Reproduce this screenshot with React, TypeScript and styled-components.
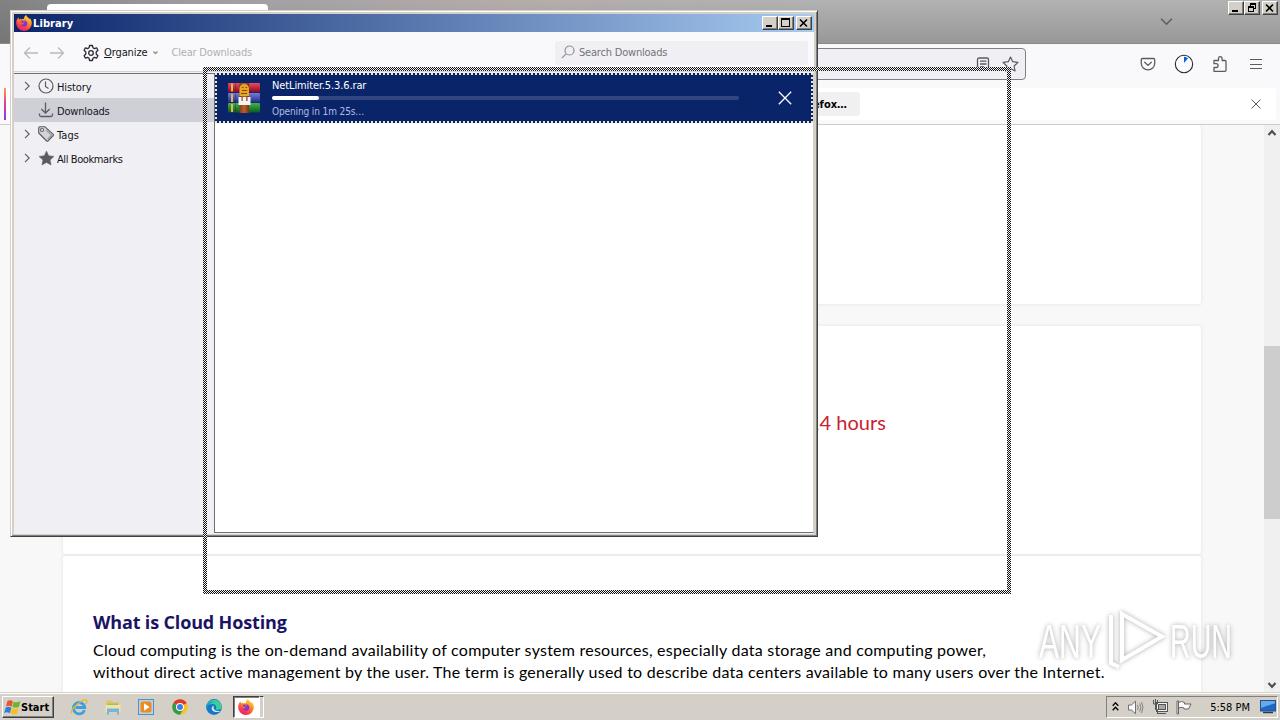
import styled, { createGlobalStyle } from 'styled-components';

const GlobalStyle = createGlobalStyle`
    body {
        margin: 0;
        overflow: hidden;
    }
    * {
        box-sizing: border-box;
    }
    svg {
        display: block;
        flex: none;
    }
`
const Desktop = styled.div`
    position: relative;
    display: flex;
    flex-direction: column;
    width: 1280px;
    height: 720px;
    overflow: hidden;
    background: #f8f8f8;
    font-family: "DejaVu Sans Condensed", "DejaVu Sans", sans-serif;
    font-stretch: condensed;
    font-size: 11px;
    color: #15141a;
    cursor: default;
`
const Text = styled.span<{ $size?: number; $spacing?: number; $color?: string; $bold?: boolean }>`
    font-size: ${p => p.$size || 11}px;
    letter-spacing: ${p => p.$spacing || 0}px;
    color: ${p => p.$color || 'inherit'};
    font-weight: ${p => p.$bold ? 'bold' : 'normal'};
    white-space: pre;
`

/* browser */
const TabStrip = styled.div`
    display: flex;
    justify-content: flex-end;
    height: 44px;
    flex: none;
    padding: 1px 2px 0 47px;
    border-bottom: 1px solid #8a8a8a;
    background:
        linear-gradient(90deg, rgba(90, 90, 90, 0.55), rgba(120, 110, 125, 0.3) 15%, rgba(190, 150, 140, 0.18) 40%, transparent 62%),
        linear-gradient(#b2b2b2, #989898);
`
const Tab = styled.div`
    width: 221px;
    height: 36px;
    margin: 3px auto 0 0;
    border-radius: 4px;
    background: #fff;
`
const TabsChevron = styled.div`
    padding: 14px 55px 0 0;
`
const CaptionButtons = styled.div`
    display: flex;
    height: 14px;
`
const CaptionButton = styled.div<{ $gap?: boolean }>`
    display: flex;
    align-items: center;
    justify-content: center;
    width: 16px;
    height: 14px;
    margin-left: ${p => p.$gap ? 2 : 0}px;
    background: #d4d0c8;
    border: 1px solid;
    border-color: #fff #404040 #404040 #fff;
    box-shadow: inset -1px -1px 0 #808080;
`
const NavBar = styled.div`
    display: flex;
    align-items: center;
    height: 44px;
    flex: none;
    padding: 0 14px 4px 200px;
    background: #f9f9fb;
`
const UrlBar = styled.div`
    display: flex;
    align-items: center;
    justify-content: flex-end;
    gap: 12px;
    width: 826px;
    height: 32px;
    padding-right: 6px;
    border: 1px solid #7f7f8a;
    border-radius: 4px;
    background: #f0f0f4;
`
const NavIcons = styled.div`
    display: flex;
    align-items: center;
    gap: 18px;
    margin-left: auto;
`
const InfoBar = styled.div`
    display: flex;
    height: 37px;
    flex: none;
    padding: 0 4px 4px 4px;
    background: #f9f9fb;
    border-bottom: 1px solid #ccc;
`
const InfoStripe = styled.div`
    width: 2px;
    height: 32px;
    background: linear-gradient(#ff9a56, #e0389a 50%, #8a3ae8);
`
const InfoBody = styled.div`
    display: flex;
    align-items: center;
    justify-content: space-between;
    flex: 1;
    height: 32px;
    padding: 0 15px 0 594px;
    background: #fff;
    border-radius: 0 4px 4px 0;
`
const InfoButton = styled.div`
    display: flex;
    align-items: center;
    justify-content: flex-end;
    width: 260px;
    height: 24px;
    padding-right: 13px;
    border-radius: 4px;
    background: #f0f0f0;
    font-size: 11px;
    font-weight: bold;
    color: #000;
`
const PageArea = styled.div`
    display: flex;
    flex: 1;
    min-height: 0;
`
const Page = styled.div`
    display: flex;
    flex-direction: column;
    flex: 1;
    padding: 0 63px;
    overflow: hidden;
    font-family: "Noto Sans", sans-serif;
    font-stretch: normal;
    color: #111;
`
const Card = styled.div<{ $height: number; $gap: number }>`
    height: ${p => p.$height}px;
    flex: none;
    width: 1138px;
    margin-bottom: ${p => p.$gap}px;
    background: #fff;
    border-radius: 3px;
    box-shadow: 0 0 4px #e2e2e2;
`
const ExpireText = styled.p`
    margin: 0;
    padding: 81px 0 0 745px;
    font-family: Lato, sans-serif;
    font-size: 20px;
    line-height: 30px;
    color: #cc2030;
    white-space: pre;
`
const Article = styled.div`
    padding: 55px 0 0 30px;
    line-height: 22px;
`
const ArticleTitle = styled.h2`
    margin: 0 0 6px;
    font-family: "Open Sans", sans-serif;
    font-size: 18px;
    line-height: 22px;
    font-weight: 700;
    color: #1b1464;
    letter-spacing: -0.15px;
    white-space: pre;
`
const ArticleLine = styled.div<{ $spacing: number }>`
    font-family: Lato, sans-serif;
    font-size: 16px;
    letter-spacing: ${p => p.$spacing}px;
    color: #000;
    white-space: pre;
`
const Scrollbar = styled.div`
    display: flex;
    flex-direction: column;
    align-items: center;
    justify-content: space-between;
    width: 16px;
    padding: 4px 0 3px;
    background: #f0f0f0;
`
const ScrollTrack = styled.div`
    flex: 1;
    width: 16px;
    padding-top: 209px;
`
const ScrollThumb = styled.div`
    height: 173px;
    background: #cdcdcd;
`

/* library window */
const LibraryWindow = styled.div`
    position: absolute;
    left: 10px;
    top: 10px;
    display: flex;
    flex-direction: column;
    width: 808px;
    height: 527px;
    padding: 2px;
    background: #d4d0c8;
    border: 1px solid;
    border-color: #d4d0c8 #404040 #404040 #d4d0c8;
    box-shadow: inset 1px 1px 0 #fff, inset -1px -1px 0 #808080;
`
const TitleBar = styled.div`
    display: flex;
    align-items: center;
    height: 18px;
    flex: none;
    margin: 1px 1px 0;
    padding: 0 2px;
    background: linear-gradient(90deg, #0a246a, #a6caf0);
    color: #fff;
`
const TitleText = styled(Text)`
    margin: 0 auto 0 1px;
    padding-top: 2px;
    line-height: 16px;
`
const Toolbar = styled.div`
    display: flex;
    align-items: center;
    height: 39px;
    flex: none;
    margin: 0 1px;
    padding: 2px 6px 0 9px;
    background: #f9f9fb;
`
const HistoryButtons = styled.div`
    display: flex;
    gap: 11px;
`
const Organize = styled.div`
    display: flex;
    align-items: center;
    margin: 0 14px 0 17px;
    gap: 5px;
`
const SearchBox = styled.div`
    display: flex;
    align-items: center;
    gap: 3px;
    width: 253px;
    height: 24px;
    margin-left: auto;
    padding-left: 6px;
    background: #f0f0f4;
    border-radius: 3px;
`
const LibraryBody = styled.div`
    display: flex;
    flex: 1;
    margin: 0 1px;
    border-top: 1px solid #d2d2d2;
    background: #f0f0f4;
`
const Sidebar = styled.div`
    width: 200px;
    margin-top: 1px;
    border-top: 1px solid #707070;
`
const SideRow = styled.div<{ $selected?: boolean }>`
    display: flex;
    align-items: center;
    height: 24px;
    padding-left: 8px;
    background: ${p => p.$selected ? '#cfcfd8' : 'transparent'};
`
const SideIcons = styled.div`
    display: flex;
    align-items: center;
    gap: 6px;
    width: 35px;
`
const SideLabel = styled(Text)`
    padding-top: 2px;
`
const DownloadList = styled.div`
    flex: 1;
    margin: 1px 0 1px;
    border: 1px solid #707070;
    border-top: 0;
    border-right-color: #d4d0c8;
    background: #fff;
`
const DownloadItem = styled.div`
    height: 50px;
    padding: 2px;
    background:
        repeating-linear-gradient(90deg, #e8e4d0 0 2px, #0a246a 2px 4px) top / 100% 2px no-repeat,
        repeating-linear-gradient(90deg, #e8e4d0 0 2px, #0a246a 2px 4px) bottom / 100% 2px no-repeat,
        repeating-linear-gradient(#e8e4d0 0 2px, #0a246a 2px 4px) left / 2px 100% no-repeat,
        repeating-linear-gradient(#e8e4d0 0 2px, #0a246a 2px 4px) right / 2px 100% no-repeat,
        #0a246a;
    color: #fff;
`
const DownloadInner = styled.div`
    display: flex;
    align-items: center;
    height: 46px;
    padding: 0 19px 0 10px;
`
const DownloadInfo = styled.div`
    display: flex;
    flex-direction: column;
    width: 467px;
    margin-left: 12px;
    margin-right: auto;
    padding-top: 2px;
    line-height: 14px;
`
const ProgressTrack = styled.div`
    height: 4px;
    margin: 3px 0 5px;
    border-radius: 2px;
    background: #32477f;
`
const ProgressFill = styled.div`
    height: 4px;
    border-radius: 2px;
    background: #fff;
`

/* outline that is dragged along with the mouse */
const DragOutline = styled.div`
    position: absolute;
    left: 203px;
    top: 67px;
    width: 808px;
    height: 527px;
    background: repeating-conic-gradient(#111 0 25%, #f4f4f4 0 50%) 0 0 / 2px 2px;
    clip-path: polygon(evenodd, 0 0, 100% 0, 100% 100%, 0 100%, 0 0, 4px 4px, 804px 4px, 804px 523px, 4px 523px, 4px 4px);
`
const Watermark = styled.div`
    position: absolute;
    left: 1032px;
    top: 604px;
    opacity: 0.85;
    filter: drop-shadow(0 0 2px rgba(0, 0, 0, 0.28)) drop-shadow(0 0 3px rgba(0, 0, 0, 0.14));
`

/* taskbar */
const Taskbar = styled.div`
    display: flex;
    align-items: center;
    height: 28px;
    flex: none;
    padding: 1px 2px 0;
    background: #d4d0c8;
    border-top: 1px solid #d4d0c8;
    box-shadow: inset 0 1px 0 #fff;
`
const StartButton = styled.div`
    display: flex;
    align-items: center;
    width: 52px;
    height: 22px;
    padding-left: 1px;
    background: #d4d0c8;
    border: 1px solid;
    border-color: #fff #404040 #404040 #fff;
    box-shadow: inset -1px -1px 0 #808080;
    color: #000;
`
const QuickLaunch = styled.div`
    display: flex;
    align-items: center;
    gap: 15.700px;
    margin-left: 16px;
`
const TaskButton = styled.div`
    display: flex;
    align-items: center;
    justify-content: center;
    width: 27px;
    height: 22px;
    margin-left: 10px;
    background: #fff;
    border: 1px solid;
    border-color: #404040 #fff #fff #404040;
    box-shadow: inset 1px 1px 0 #808080;
`
const TaskStack = styled.div`
    width: 4px;
    height: 22px;
    border: 1px solid;
    border-color: #404040 #fff #fff transparent;
    border-left: 0;
`
const Tray = styled.div`
    display: flex;
    align-items: center;
    width: 172px;
    height: 22px;
    margin-left: auto;
    padding: 0 1px 0 5px;
    border: 1px solid;
    border-color: #808080 #fff #fff #808080;
    color: #000;
`
const TrayIcons = styled.div`
    display: flex;
    align-items: center;
    gap: 8px;
    margin-right: auto;
`
const Clock = styled(Text)`
    margin-right: 10px;
`

const MinimizeGlyph = () => (
    <svg width="10" height="10" shapeRendering="crispEdges"><rect x="1" y="7" width="6" height="2" /></svg>
)
const MaximizeGlyph = () => (
    <svg width="10" height="10" shapeRendering="crispEdges"><path d="M0 0h9v9H0zM1 2v6h7V2z" fillRule="evenodd" /></svg>
)
const RestoreGlyph = () => (
    <svg width="10" height="10" shapeRendering="crispEdges"><path d="M3 0h6v6H7v3H1V3h2zM4 2v1h3v2h1V2zM2 5v3h4V5z" fillRule="evenodd" /></svg>
)
const CloseGlyph = () => (
    <svg width="10" height="10" viewBox="0 0 10 10"><path d="M1 1.500l7 7M8 1.500l-7 7" stroke="#000" strokeWidth="1.600" /></svg>
)
const Cross = ({ size, color, width = 1.2 }: { size: number; color: string; width?: number }) => (
    <svg width={size} height={size} viewBox="0 0 12 12"><path d="M.7.7l10.6 10.6M11.3.7L.7 11.3" stroke={color} strokeWidth={width} /></svg>
)
const Chevron = ({ dir, w = 12, color = '#5b5b66' }: { dir: string; w?: number; color?: string }) => (
    <svg width={w} height={w} viewBox="0 0 12 12" fill="none" stroke={color} strokeWidth={w < 8 ? 3 : 1.4}>
        {dir === 'down' && <path d="M1 3.5l5 5 5-5" />}
        {dir === 'right' && <path d="M3.600 1L8.600 6l-5 5" />}
    </svg>
)
const ScrollArrow = ({ up }: { up?: boolean }) => (
    <svg width="10" height="8" viewBox="0 0 10 8" fill="none" stroke="#505050" strokeWidth="2.2">
        {up ? <path d="M1.500 6L5 2.200 8.500 6" /> : <path d="M1.500 2L5 5.800 8.500 2" />}
    </svg>
)
const NavArrow = ({ right }: { right?: boolean }) => (
    <svg width="16" height="14" viewBox="0 0 16 14" fill="none" stroke="#b8b8bd" strokeWidth="1.300">
        {right ? <path d="M0 7h13.500M8 1.500L13.500 7 8 12.500" /> : <path d="M15 7H1.500M7 1.500L1.500 7 7 12.500" />}
    </svg>
)
const Firefox = ({ size }: { size: number }) => (
    <svg width={size} height={size} viewBox="0 0 16 16">
        <defs>
            <linearGradient id="fx" x1="0.8" y1="0" x2="0.3" y2="1">
                <stop offset="0" stopColor="#ffe838" />
                <stop offset="0.4" stopColor="#ff9020" />
                <stop offset="0.75" stopColor="#ff3c48" />
                <stop offset="1" stopColor="#e01c70" />
            </linearGradient>
        </defs>
        <path d="M2.500 2.300C1 3.800.2 5.800.2 8.200a7.800 7.700 0 0 0 15.600 0c0-2.200-.8-4.200-2.200-5.300.2.500.3 1 .3 1.400C12.700 2.700 10.500 2 10.200 0 8.600.9 8 2.500 8 3.800c-1 .1-1.700.3-2.400.8-.7-.4-.9-1.200-.9-1.200-.6.300-1 .8-1.300 1.200-.6-.8-.9-1.500-.9-2.300z" fill="url(#fx)" />
        <path d="M5 6c1.200-1.200 4.400-1.200 5.700.4 1.300 1.700.8 4.200-1.100 5-1.900.8-4.400-.2-5-2 1 .5 2.200.3 2.900-.3.700-.6.200-.9-.4-1C6 8 5.200 7.200 5 6z" fill="#8135d8" />
        <path d="M8 3.900c-1.300.1-2.200.5-2.800 1.100 2 .1 3.600.4 3.900 1.300-.6.500-1.700.3-2 1.200" fill="#ffb52b" opacity=".75" />
    </svg>
)
const Gear = () => (
    <svg width="16" height="18" viewBox="0 0 16 18" fill="none" stroke="#2b2a33" strokeWidth="1.300" strokeLinejoin="round">
        <path d="M6.600 1.500h2.800l.6 2.300 1.400.8 2.200-.8 1.300 2.400L13.200 8v2l1.700 1.800-1.300 2.400-2.200-.8-1.400.8-.6 2.300H6.600L6 14.200l-1.400-.8-2.200.8-1.300-2.400L2.800 10V8L1.100 6.200l1.300-2.400 2.200.8L6 3.800z" />
        <circle cx="8" cy="9" r="2.300" />
    </svg>
)
const SearchIcon = () => (
    <svg width="15" height="15" viewBox="0 0 15 15" fill="none" stroke="#8f8f96" strokeWidth="1.200">
        <circle cx="8.500" cy="5.500" r="4.500" />
        <path d="M5.200 8.800L.8 13.200" />
    </svg>
)
const HistoryIcon = () => (
    <svg width="16" height="16" viewBox="0 0 16 16" fill="none" stroke="#5b5b60" strokeWidth="1.200">
        <circle cx="8" cy="8" r="7" /><path d="M7.500 3.500V8.400l3 2" />
    </svg>
)
const DownloadIcon = () => (
    <svg width="16" height="16" viewBox="0 0 16 16" fill="none" stroke="#5b5b60" strokeWidth="1.300">
        <path d="M7.500 .5v10.500M3.300 7l4.200 4 4.200-4M1.500 11.500v1.500q0 1.500 1.500 1.500h10q1.500 0 1.500-1.500v-1.500" />
    </svg>
)
const TagIcon = () => (
    <svg width="16" height="16" viewBox="0 0 16 16" fill="#d4d4d8" stroke="#5b5b60" strokeWidth="1.100" strokeLinejoin="round">
        <path d="M.7 1.700q0-1 1-1h5.100L15.300 8.300q.6.600 0 1.200L9.900 15q-.6.500-1.200 0L.7 7z" />
        <path d="M8 4l5.500 5-4 4.200" fill="none" stroke="#9a9aa0" />
        <circle cx="4" cy="4" r="1.500" fill="#fff" />
    </svg>
)
const StarIcon = ({ filled }: { filled?: boolean }) => (
    <svg width="17" height="16" viewBox="0 0 17 16" fill={filled ? '#5b5b60' : 'none'} stroke="#5b5b66" strokeWidth={filled ? 0.5 : 1.2} strokeLinejoin="round">
        <path d="M8.500 1l2.200 4.700 5.300.7-3.900 3.600 1 5-4.600-2.500L3.900 15l1-5L1 6.400l5.300-.7z" />
    </svg>
)
const RarIcon = () => (
    <svg width="33" height="32" viewBox="0 0 33 32">
        <defs>
            {[['r', '#ef4a60', '#7d0c20'], ['b', '#6f7fe0', '#232c7d'], ['g', '#42b450', '#0c5a1c']].map(c => (
                <linearGradient key={c[0]} id={'book' + c[0]} x1="0" y1="0" x2="0" y2="1">
                    <stop offset="0" stopColor={c[1]} /><stop offset="1" stopColor={c[2]} />
                </linearGradient>
            ))}
            <linearGradient id="belt" x1="0" x2="1"><stop stopColor="#8a3c18" /><stop offset=".5" stopColor="#b8602c" /><stop offset="1" stopColor="#7a3010" /></linearGradient>
        </defs>
        <rect x="1" y="1" width="32" height="9.500" rx="1" fill="url(#bookr)" />
        <rect x="1" y="11" width="32" height="9.500" rx="1" fill="url(#bookb)" />
        <rect x="1" y="21" width="32" height="9.500" rx="1" fill="url(#bookg)" />
        <path d="M5 1.500v8M5 12v8M5 22v8" stroke="#e8b54a" strokeWidth="2" />
        <path d="M8.500 1v29" stroke="#161a3c" strokeWidth=".8" opacity=".4" />
        <rect x="12.500" y="1" width="9.500" height="30" fill="url(#belt)" />
        <path d="M12.500 14V6q1-4 4.800-4T22 6v8z" fill="#e9a526" />
        <path d="M15 5.500h1.500M18.500 5.500H20M15 8.500h5M14 11.500h6" stroke="#7b4810" />
        <path d="M11.500 15h3v4h1.300v-4h3.400v4h1.300v-4h3v8h-12z" fill="#f4f4f4" />
    </svg>
)
const ReaderIcon = () => (
    <svg width="14" height="14" viewBox="0 0 14 14" fill="none" stroke="#5b5b66" strokeWidth="1.300">
        <rect x="1.500" y="1" width="11" height="12" rx="1.500" /><path d="M4 4.200h6.500M4 7h6.500M4 9.800h4" />
    </svg>
)
const PocketIcon = () => (
    <svg width="16" height="16" viewBox="0 0 16 16" fill="none" stroke="#5b5b66" strokeWidth="1.300" strokeLinecap="round" strokeLinejoin="round">
        <path d="M2.500 2.500h11q1.200 0 1.200 1.200v3.800a6.700 6.300 0 0 1-13.400 0V3.700q0-1.200 1.200-1.200zM4.700 6.200L8 9.400l3.300-3.200" />
    </svg>
)
const ProgressIcon = () => (
    <svg width="20" height="20" viewBox="0 0 20 20">
        <circle cx="10" cy="10" r="8.700" fill="#fbfbfd" stroke="#2b2a33" strokeWidth="1.100" />
        <path d="M10 9V2.800q2.300 0 4 1.500z" fill="#0061e0" />
    </svg>
)
const ExtensionIcon = () => (
    <svg width="16" height="18" viewBox="0 0 16 18" fill="none" stroke="#5b5b66" strokeWidth="1.300" strokeLinejoin="round">
        <path d="M2 16.300V12.500h2.200a1.900 1.900 0 0 0 0-3.800H2V5.500h4.500V3.500a1.800 1.800 0 0 1 3.600 0v2H13q1 0 1 1v8.800q0 1-1 1z" />
    </svg>
)
const MenuIcon = () => (
    <svg width="20" height="14" viewBox="0 0 20 14" shapeRendering="crispEdges"><path d="M4 2.500h12M4 7.500h12M4 11.500h12" stroke="#5b5b66" /></svg>
)
const WindowsFlag = () => (
    <svg width="17" height="17" viewBox="0 0 16 16">
        <path d="M3.200 1.800q2.500-1.500 5.200.2L7.200 7.200Q4.500 5.800 1.900 7z" fill="#e8562a" />
        <path d="M9 2.500q2.800 1.500 6.500-.7L14 7.300q-2.800 1.500-6.100.2z" fill="#6cb52d" />
        <path d="M1.600 8q2.700-1.300 5.300.2L5.600 13.300Q3 11.800.2 13.200z" fill="#2f7fd6" />
        <path d="M7.600 8.500q3 1.400 6.200-.2L12.400 13.600q-2.700 1.800-6.100.3z" fill="#f6bf26" />
    </svg>
)
const IEIcon = () => (
    <svg width="18" height="18" viewBox="0 0 18 18" fill="none">
        <path d="M14.500 12.200A5.700 5.700 0 1 1 14.800 9.500H5.500" stroke="#3f9fdc" strokeWidth="2.800" />
        <path d="M1.500 15.500C-.5 12.500 12 .2 16.300 2c1 .6.300 2.800-.5 4" stroke="#e6b62f" strokeWidth="1.300" />
    </svg>
)
const ExplorerIcon = () => (
    <svg width="18" height="18" viewBox="0 0 18 18">
        <path d="M2 3l5-1 1.500 2H15v9H2z" fill="#e7c469" />
        <path d="M3.500 5.500H14V9H3.500z" fill="#8ac48a" />
        <path d="M1.500 7h15v7h-15z" fill="#f7e29a" />
        <path d="M4 16.500v-5h10v5M4 13h10" fill="none" stroke="#74b7de" strokeWidth="2" />
    </svg>
)
const PlayerIcon = () => (
    <svg width="18" height="18" viewBox="0 0 18 18">
        <rect x="1.500" y="1.500" width="15" height="15" fill="#b4d4ee" stroke="#5590c0" />
        <rect x="3.500" y="3.500" width="11" height="11" rx="2" fill="#f08a1c" />
        <path d="M7 5.200l5.500 3.800L7 12.800z" fill="#fff" />
    </svg>
)
const ChromeIcon = () => (
    <svg width="18" height="18" viewBox="0 0 18 18">
        <circle cx="9" cy="9" r="7.800" fill="#f9c51d" />
        <path d="M9 9L2.250 5.100A7.800 7.800 0 0 1 15.750 5.100z" fill="#e0392c" />
        <path d="M9 9L2.250 5.100A7.800 7.800 0 0 0 9 16.800l3.500-6z" fill="#2f9e4c" />
        <circle cx="9" cy="9" r="4" fill="#fff" /><circle cx="9" cy="9" r="3" fill="#3f7ee8" />
    </svg>
)
const EdgeIcon = () => (
    <svg width="18" height="18" viewBox="0 0 18 18">
        <circle cx="9" cy="9" r="7.900" fill="#1876c8" />
        <path d="M1.200 8A8 8 0 0 1 16.900 8.500c0 2.200-2 3.600-4.500 3.300-1.400-.2-1.800-.8-1.300-1.600C11.800 8 10 6 7.500 6 4.500 6 2 7 1.200 8z" fill="#3ccf98" />
        <path d="M1.200 8C2.500 4.500 6 2.500 10 4 6 4 3 6 2 11z" fill="#1a9ad6" />
        <path d="M9 7.500c-1.500 3 .5 6 6.500 5.700-2 1.300-7 1.500-8.500-1.500-.8-1.700 0-3.600 2-4.200z" fill="#d4ecf8" />
    </svg>
)
const TrayChevrons = () => (
    <svg width="7" height="10" viewBox="0 0 7 10" fill="none" stroke="#000" strokeWidth="1.300"><path d="M.7 3.800l2.800-3 2.800 3M.7 8.300l2.800-3 2.800 3" /></svg>
)
const VolumeIcon = () => (
    <svg width="17" height="15" viewBox="0 0 17 15" fill="none" stroke="#707070">
        <path d="M1.500 5h3l4-3.800v12.600L4.500 10h-3z" fill="#fafafa" />
        <path d="M10.500 5q1.500 2.500 0 5M12.700 3.500q2.400 4 0 8M14.500 2q3 5.500 0 11" stroke="#808080" />
    </svg>
)
const NetworkIcon = () => (
    <svg width="16" height="16" viewBox="0 0 16 16" fill="none" stroke="#555">
        <rect x="4.500" y="3.500" width="11" height="9" fill="#f4f4f4" /><rect x="6.500" y="5.500" width="7" height="5" fill="#a8a8a8" />
        <path d="M6 14.500h8M1.500 1v4h4V1M3.500 0v10.500h2V15" />
    </svg>
)
const FlagIcon = () => (
    <svg width="16" height="15" viewBox="0 0 16 15" stroke="#666" fill="#fafafa">
        <path d="M1 1h1.500v13H1zM2.500 2.500q3-2 6 0V4H15l-2.500 5H8V8Q5 6.500 2.500 8z" />
    </svg>
)
const MonitorIcon = () => (
    <svg width="16" height="14" viewBox="0 0 16 14">
        <rect x=".5" y=".5" width="15" height="10.500" fill="#1c68c8" stroke="#285080" />
        <path d="M1 1h14v2.500Q8 5 1 8z" fill="#67a9ee" /><path d="M3 12.500h10" stroke="#303a48" strokeWidth="1.500" />
    </svg>
)

const sideRows = [
    { name: 'History', icon: <HistoryIcon />, open: true, spacing: -0.1 },
    { name: 'Downloads', icon: <DownloadIcon />, open: false, spacing: -0.2 },
    { name: 'Tags', icon: <TagIcon />, open: true, spacing: 0.1 },
    { name: 'All Bookmarks', icon: <StarIcon filled />, open: true, spacing: -0.4 },
]

function Browser(){
    return (
        <>
            <TabStrip>
                <Tab />
                <TabsChevron><Chevron dir="down" w={13} /></TabsChevron>
                <CaptionButtons>
                    <CaptionButton><MinimizeGlyph /></CaptionButton>
                    <CaptionButton><RestoreGlyph /></CaptionButton>
                    <CaptionButton $gap><CloseGlyph /></CaptionButton>
                </CaptionButtons>
            </TabStrip>
            <NavBar>
                <UrlBar><ReaderIcon /><StarIcon /></UrlBar>
                <NavIcons>
                    <PocketIcon />
                    <ProgressIcon />
                    <ExtensionIcon />
                    <MenuIcon />
                </NavIcons>
            </NavBar>
            <InfoBar>
                <InfoStripe />
                <InfoBody>
                    <InfoButton>Refresh Firefox…</InfoButton>
                    <Cross size={10} color="#5b5b66" />
                </InfoBody>
            </InfoBar>
            <PageArea>
                <Page>
                    <Card $height={179} $gap={22} />
                    <Card $height={228} $gap={2}>
                        <ExpireText>14 hours</ExpireText>
                    </Card>
                    <Card $height={200} $gap={0}>
                        <Article>
                            <ArticleTitle>What is Cloud Hosting</ArticleTitle>
                            <ArticleLine $spacing={0.24}>Cloud computing is the on-demand availability of computer system resources, especially data storage and computing power,</ArticleLine>
                            <ArticleLine $spacing={0.25}>without direct active management by the user. The term is generally used to describe data centers available to many users over the Internet.</ArticleLine>
                        </Article>
                    </Card>
                </Page>
                <Scrollbar>
                    <ScrollArrow up />
                    <ScrollTrack><ScrollThumb /></ScrollTrack>
                    <ScrollArrow />
                </Scrollbar>
            </PageArea>
        </>
    )
}

function Library(){
    return (
        <LibraryWindow>
            <TitleBar>
                <Firefox size={16} />
                <TitleText $bold $spacing={0.1}>Library</TitleText>
                <CaptionButtons>
                    <CaptionButton><MinimizeGlyph /></CaptionButton>
                    <CaptionButton><MaximizeGlyph /></CaptionButton>
                    <CaptionButton $gap><CloseGlyph /></CaptionButton>
                </CaptionButtons>
            </TitleBar>
            <Toolbar>
                <HistoryButtons>
                    <NavArrow />
                    <NavArrow right />
                </HistoryButtons>
                <Organize>
                    <Gear />
                    <Text $spacing={-0.1}><u>O</u>rganize</Text>
                    <Chevron dir="down" w={5} color="#8f8f96" />
                </Organize>
                <Text $color="#b0b0b5" $spacing={-0.2}>Clear Downloads</Text>
                <SearchBox>
                    <SearchIcon />
                    <Text $color="#737378" $spacing={-0.2}>Search Downloads</Text>
                </SearchBox>
            </Toolbar>
            <LibraryBody>
                <Sidebar>
                    {sideRows.map(row => (
                        <SideRow key={row.name} $selected={row.name === 'Downloads'}>
                            <SideIcons>
                                {row.open ? <Chevron dir="right" w={10} /> : <svg width="10" height="10" />}
                                {row.icon}
                            </SideIcons>
                            <SideLabel $spacing={row.spacing}>{row.name}</SideLabel>
                        </SideRow>
                    ))}
                </Sidebar>
                <DownloadList>
                    <DownloadItem>
                        <DownloadInner>
                            <RarIcon />
                            <DownloadInfo>
                                <Text $spacing={-0.12}>NetLimiter.5.3.6.rar</Text>
                                <ProgressTrack><ProgressFill style={{ width: '10%' }} /></ProgressTrack>
                                <Text $size={10} $color="#b4bde0" $spacing={-0.12}>Opening in 1m 25s…</Text>
                            </DownloadInfo>
                            <Cross size={14} color="#fff" width={1.1} />
                        </DownloadInner>
                    </DownloadItem>
                </DownloadList>
            </LibraryBody>
        </LibraryWindow>
    )
}

export default function App(){
    return (
        <Desktop>
            <GlobalStyle />
            <Browser />
            <Taskbar>
                <StartButton><WindowsFlag /><Text $bold>Start</Text></StartButton>
                <QuickLaunch>
                    <IEIcon />
                    <ExplorerIcon />
                    <PlayerIcon />
                    <ChromeIcon />
                    <EdgeIcon />
                </QuickLaunch>
                <TaskButton><Firefox size={16} /></TaskButton>
                <TaskStack />
                <Tray>
                    <TrayIcons>
                        <TrayChevrons />
                        <VolumeIcon />
                        <NetworkIcon />
                        <FlagIcon />
                    </TrayIcons>
                    <Clock>5:58 PM</Clock>
                    <MonitorIcon />
                </Tray>
            </Taskbar>
            <Library />
            <DragOutline />
            <Watermark>
                <svg width="246" height="76" viewBox="0 0 246 76" fontFamily="Liberation Sans Narrow, Liberation Sans, sans-serif" fontSize="49" fill="#fff">
                    <text x="7" y="54" textLength="62" lengthAdjust="spacingAndGlyphs">ANY</text>
                    <text x="138" y="54" textLength="62" lengthAdjust="spacingAndGlyphs">RUN</text>
                    <path d="M90 10l40 22.500L90 56zM79 11v48l8 4" fill="none" stroke="#fff" strokeWidth="4" />
                </svg>
            </Watermark>
        </Desktop>
    )
}
